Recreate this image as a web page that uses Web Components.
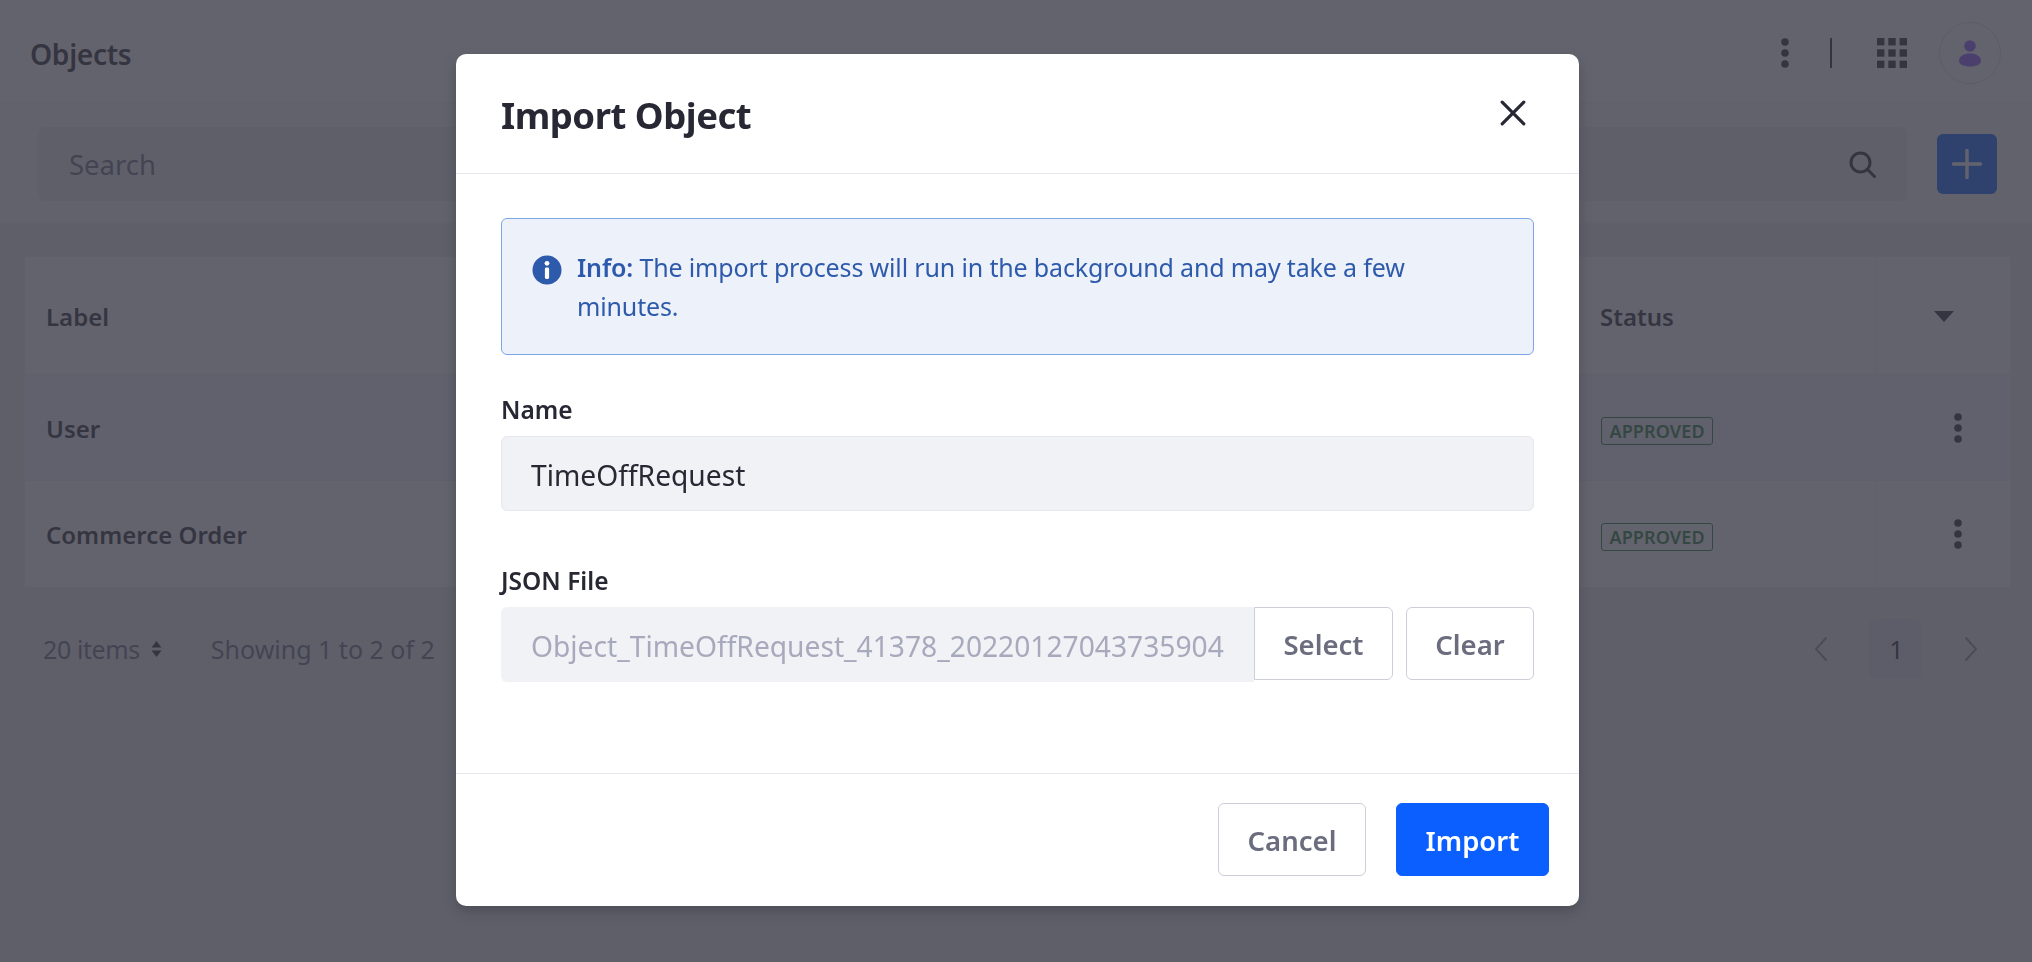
<!DOCTYPE html>
<html lang="en">
<head>
<meta charset="utf-8">
<title>Objects</title>
<style>
  html, body { margin: 0; height: 100%; }
  body {
    background: #ecedf1;
    color: #272833;
    font-family: "Noto Sans", "Open Sans", "Liberation Sans", sans-serif;
    overflow: hidden;
  }
</style>
</head>
<body>

<app-topbar heading="Objects"></app-topbar>
<search-bar placeholder="Search"></search-bar>

<object-table>
  <object-row slot="head" label="Label" status="Status" head></object-row>
  <object-row label="User" status="APPROVED" hovered></object-row>
  <object-row label="Commerce Order" status="APPROVED"></object-row>
</object-table>

<table-footer></table-footer>

<modal-dialog heading="Import Object">
  <info-alert>
    <strong>Info:</strong> The import process will run in the background and may take a few<br>minutes.
  </info-alert>
  <form-field label="Name" value="TimeOffRequest"></form-field>
  <file-field label="JSON File" value="Object_TimeOffRequest_41378_20220127043735904"></file-field>
  <ui-button slot="footer" style="width:148px">Cancel</ui-button>
  <ui-button slot="footer" primary style="width:153px">Import</ui-button>
</modal-dialog>

<script>
// small helper so every element sets up its shadow root the same way
function shadow(el, html) {
  el.attachShadow({mode: 'open'}).innerHTML = html;
}

const KEBAB = `<svg width="8" height="30" viewBox="0 0 8 30" fill="currentColor">
  <circle cx="4" cy="4" r="3.8"/><circle cx="4" cy="15" r="3.8"/><circle cx="4" cy="26" r="3.8"/></svg>`;

class AppTopbar extends HTMLElement {
  connectedCallback() {
    const cells = [0, 11.3, 22.6];
    let squares = '';
    cells.forEach(y => cells.forEach(x => {
      squares += `<rect x="${x}" y="${y}" width="7.4" height="7.4"/>`;
    }));
    shadow(this, `
      <style>
        :host { display: flex; align-items: center; height: 103px; box-sizing: border-box;
          background: #fff; border-bottom: 1px solid #f0f1f4; padding: 3px 31px 0 30px; }
        h1 { margin: 0; padding-top: 3px; font-size: 28.2px; font-weight: 600; line-height: 1; flex: 1; letter-spacing: -.35px; }
        .kebab { color: #272833; display: flex; margin-right: 41px; }
        .divider { width: 2px; height: 30px; background: #272833; margin-right: 45px; }
        .apps { fill: #272833; display: block; margin-right: 32px; }
        .avatar { width: 62px; height: 62px; box-sizing: border-box; border: 1px solid #dcdde5; border-radius: 50%;
          display: flex; align-items: center; justify-content: center; }
      </style>
      <h1>${this.getAttribute('heading')}</h1>
      <span class="kebab">${KEBAB}</span>
      <span class="divider"></span>
      <svg class="apps" width="30" height="30" viewBox="0 0 30 30">${squares}</svg>
      <span class="avatar">
        <svg width="24" height="28" viewBox="0 0 24 28" fill="#8f5bff">
          <circle cx="12" cy="7" r="5.8"/>
          <path d="M1 22c0-5 5-7.6 11-7.6S23 17 23 22c0 3-4 5.5-11 5.5S1 25 1 22z"/>
        </svg>
      </span>`);
  }
}
customElements.define('app-topbar', AppTopbar);

class SearchBar extends HTMLElement {
  connectedCallback() {
    shadow(this, `
      <style>
        :host { display: flex; align-items: center; height: 121px; box-sizing: border-box; background: #f8f9fa;
          border-bottom: 1px solid #eff0f3; padding: 1px 35px 0 38px; gap: 30px; }
        .input { flex: 1; height: 74px; box-sizing: border-box; background: #ecedf1; border-radius: 6px;
          display: flex; align-items: center; justify-content: space-between; padding: 2px 31px 0; }
        .ph { font-size: 27.5px; color: #6b6c7e; }
        .add { width: 60px; height: 60px; border-radius: 6px; background: #0b5fff; display: flex;
          align-items: center; justify-content: center; }
      </style>
      <div class="input">
        <span class="ph">${this.getAttribute('placeholder')}</span>
        <svg width="27" height="27" viewBox="0 0 27 27" fill="none" stroke="#272833" stroke-width="3" stroke-linecap="round">
          <circle cx="11.5" cy="11.5" r="9.5"/><path d="M18.5 18.5l7 7"/>
        </svg>
      </div>
      <span class="add">
        <svg width="30" height="30" viewBox="0 0 30 30" stroke="#fff" stroke-width="3.4" stroke-linecap="round">
          <path d="M15 1.5v27M1.5 15h27"/>
        </svg>
      </span>`);
  }
}
customElements.define('search-bar', SearchBar);

class ObjectTable extends HTMLElement {
  constructor() {
    super();
    shadow(this, `
      <style>
        :host { display: block; margin: 32px 21px 0 24px; background: #fff; border: 1px solid #f0f1f4; border-radius: 2px; }
      </style>
      <slot name="head"></slot>
      <slot></slot>`);
  }
}
customElements.define('object-table', ObjectTable);

class ObjectRow extends HTMLElement {
  connectedCallback() {
    const head = this.hasAttribute('head');
    const status = this.getAttribute('status');
    const caret = `<svg width="20" height="11" viewBox="0 0 20 11" fill="#272833"><path d="M0 0h20L10 11z"/></svg>`;
    shadow(this, `
      <style>
        :host { display: grid; grid-template-columns: 1fr 300px 135px; height: ${head ? 118 : 106}px; }
        :host(:not(:last-child)) { border-bottom: 1px solid #eef0f3; box-sizing: border-box; }
        :host([hovered]) { background: #eef3fb; }
        div { display: flex; align-items: center; font-size: 24px; font-weight: 600; color: #272833; padding-top: 1px; }
        .label { padding-left: 21px; }
        .status { padding-left: 25px; }
        .act { justify-content: center; border-left: 1px solid #f0f1f4; padding-left: 30px; padding-top: 0; }
        :host([head]) .act { padding-left: 2px; padding-top: 2px; }
        .badge { font-size: 18px; font-weight: 600; line-height: 26px; height: 28px; box-sizing: border-box;
          padding: 0 7.5px; margin: 5px 0 0 1px; color: #287d3c; border: 1px solid #287d3c; border-radius: 3px; letter-spacing: .1px; }
      </style>
      <div class="label">${this.getAttribute('label')}</div>
      <div class="status">${head ? status : `<span class="badge">${status}</span>`}</div>
      <div class="act">${head ? caret : KEBAB}</div>`);
  }
}
customElements.define('object-row', ObjectRow);

class TableFooter extends HTMLElement {
  connectedCallback() {
    const chevron = d => `<svg width="14" height="24" viewBox="0 0 14 24" fill="none" stroke="#8c8d9f" stroke-width="2" stroke-linecap="round"><path d="${d}"/></svg>`;
    shadow(this, `
      <style>
        :host { display: flex; align-items: center; height: 60px; margin: 31px 54px 0 43px; font-size: 25px; color: #6b6c7e; }
        .items { display: flex; align-items: center; gap: 11px; letter-spacing: -.4px; }
        .showing { margin-left: 49px; flex: 1; }
        .page { width: 53px; height: 60px; box-sizing: border-box; padding-left: 2px; border-radius: 6px; background: #e2e4eb; color: #272833; display: flex;
          align-items: center; justify-content: center; margin: 0 42px 0 41px; }
      </style>
      <span class="items">20 items
        <svg width="11" height="16" viewBox="0 0 11 16" fill="#272833"><path d="M5.5 0l5 6.4H.5zM5.5 16l5-6.4H.5z"/></svg>
      </span>
      <span class="showing">Showing 1 to 2 of 2</span>
      ${chevron('M12 1L2 12l10 11')}
      <span class="page">1</span>
      ${chevron('M2 1l10 11L2 23')}`);
  }
}
customElements.define('table-footer', TableFooter);

class ModalDialog extends HTMLElement {
  connectedCallback() {
    shadow(this, `
      <style>
        /* backdrop dims the whole page, the dialog sits in it */
        :host { position: fixed; inset: 0; background: rgba(57, 57, 70, .79); display: block; }
        .dialog { position: absolute; left: 456px; top: 54px; width: 1123px; height: 852px; background: #fff; border-radius: 10px;
          box-shadow: 0 6px 14px rgba(0, 0, 0, .2); display: flex; flex-direction: column; }
        header { height: 120px; flex: none; box-sizing: border-box; border-bottom: 1px solid #e7e7ed; display: flex;
          align-items: center; justify-content: space-between; padding: 0 52px 1px 45px; }
        h2 { margin: 0; padding-top: 4px; font-size: 36.5px; font-weight: 700; color: #272833; letter-spacing: -.5px; }
        main { flex: 1; padding: 44px 45px 0 45px; }
        footer { height: 133px; flex: none; box-sizing: border-box; border-top: 1px solid #e7e7ed; display: flex;
          justify-content: flex-end; padding: 29px 30px 0 0; gap: 30px; }
      </style>
      <div class="dialog">
        <header>
          <h2>${this.getAttribute('heading')}</h2>
          <svg width="28" height="28" viewBox="0 0 28 28" stroke="#272833" stroke-width="3.2" stroke-linecap="round"><path d="M3.2 3.2l21.6 21.6M24.8 3.2L3.2 24.8"/></svg>
        </header>
        <main><slot></slot></main>
        <footer><slot name="footer"></slot></footer>
      </div>`);
  }
}
customElements.define('modal-dialog', ModalDialog);

class InfoAlert extends HTMLElement {
  constructor() {
    super();
    shadow(this, `
      <style>
        :host { display: flex; box-sizing: border-box; height: 137px; padding: 29px 60px 0 30px; gap: 15px; background: #edf1fa;
          border: 1px solid #7ea6e6; border-radius: 6px; color: #2e5aac; font-size: 25px; line-height: 39px; letter-spacing: -.15px; }
        svg { flex: none; margin-top: 7px; }
        ::slotted(strong) { font-weight: 600; }
      </style>
      <svg width="30" height="30" viewBox="0 0 30 30">
        <circle cx="15" cy="15" r="14.5" fill="#2e5aac"/>
        <circle cx="15" cy="8.3" r="2.4" fill="#fff"/>
        <rect x="12.9" y="12.5" width="4.2" height="11.5" rx="1.4" fill="#fff"/>
      </svg>
      <span><slot></slot></span>`);
  }
}
customElements.define('info-alert', InfoAlert);

const FIELD_STYLE = `
  :host { display: block; }
  label { display: block; height: 43px; margin-top: 38px; font-size: 24.5px; font-weight: 600; color: #272833; line-height: 34px; }
  .box { height: 75px; box-sizing: border-box; background: #f1f2f5; border-radius: 6px; display: flex; align-items: center;
    padding: 2px 30px 0; font-size: 28.2px; white-space: nowrap; overflow: hidden; }
`;

class FormField extends HTMLElement {
  connectedCallback() {
    shadow(this, `
      <style>${FIELD_STYLE} .box { border: 1px solid #e7e7ed; padding-left: 29px; color: #272833; }</style>
      <label>${this.getAttribute('label')}</label>
      <div class="box">${this.getAttribute('value')}</div>`);
  }
}
customElements.define('form-field', FormField);

class FileField extends HTMLElement {
  connectedCallback() {
    shadow(this, `
      <style>${FIELD_STYLE}
        label { margin-top: 53px; }
        .row { display: flex; }
        .box { flex: 1; min-width: 0; color: #a7a9bc; border-radius: 6px 0 0 6px; padding-right: 8px; }
        ui-button { width: 139px; height: 73px; border-radius: 0 6px 6px 0; }
        ui-button + ui-button { width: 128px; margin-left: 13px; border-radius: 6px; }
      </style>
      <label>${this.getAttribute('label')}</label>
      <div class="row">
        <div class="box">${this.getAttribute('value')}</div>
        <ui-button>Select</ui-button>
        <ui-button>Clear</ui-button>
      </div>`);
  }
}
customElements.define('file-field', FileField);

class UiButton extends HTMLElement {
  constructor() {
    super();
    shadow(this, `
      <style>
        :host { display: inline-flex; align-items: center; justify-content: center; box-sizing: border-box; height: 73px;
          padding-top: 2px; background: #fff; border: 1px solid #cdced9; border-radius: 6px; color: #6b6c7e; font-size: 27.5px; font-weight: 600; }
        :host([primary]) { background: #0b5fff; border-color: #0b5fff; color: #fff; }
      </style>
      <slot></slot>`);
  }
}
customElements.define('ui-button', UiButton);
</script>
</body>
</html>
